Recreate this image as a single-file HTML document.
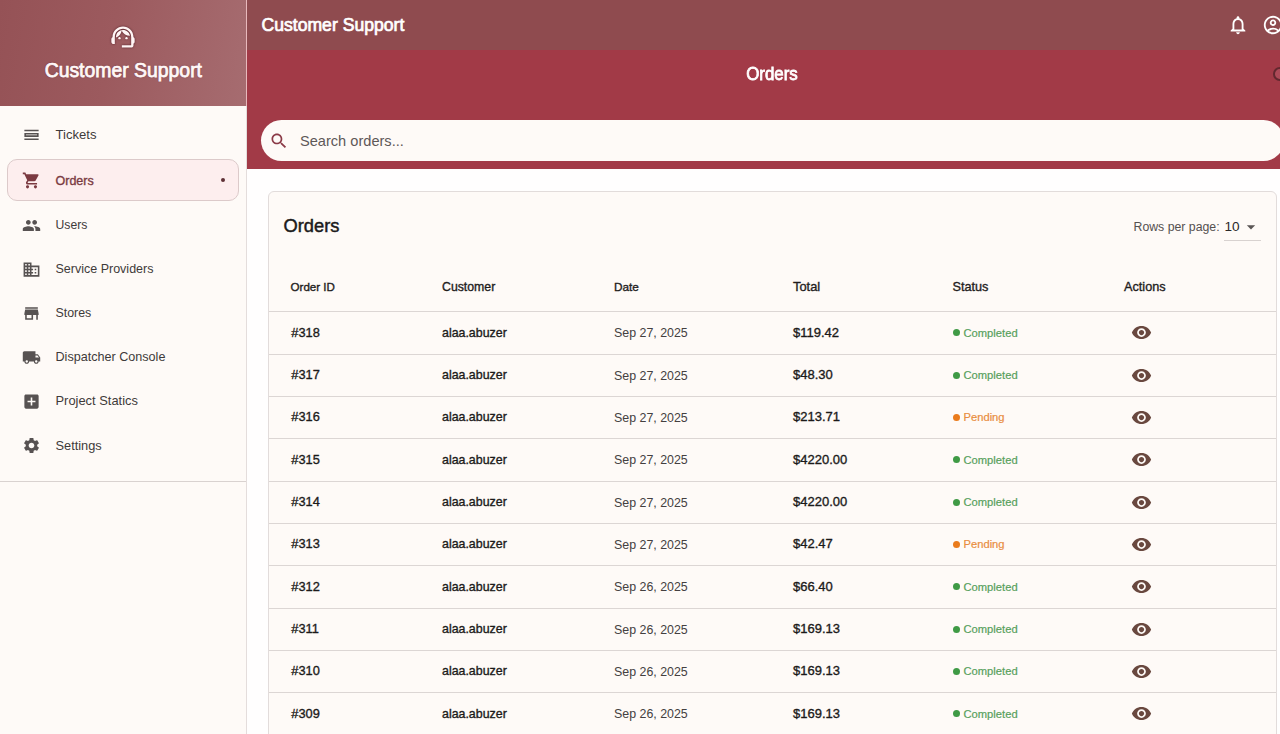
<!DOCTYPE html>
<html><head><meta charset="utf-8"><title>Customer Support - Orders</title>
<style>
html,body{margin:0;padding:0}
body{width:1280px;height:734px;overflow:hidden;position:relative;background:#fffefe;font-family:"Liberation Sans",sans-serif}
.b{position:absolute}
.t{position:absolute;white-space:nowrap}
.ic{position:absolute}
</style></head><body>

<div class="b" style="left:0;top:0;width:246px;height:734px;background:#fefaf7"></div>
<div class="b" style="left:246px;top:0;width:1px;height:734px;background:#e4dddc"></div>
<div class="b" style="left:0;top:0;width:246px;height:106px;background:linear-gradient(100deg,#955256 0%,#9c5a5e 45%,#a66c70 100%)"></div>
<div class="b" style="left:246px;top:0;width:1px;height:106px;background:#e8b9bc"></div>
<svg class="ic" style="left:109.20px;top:23.30px;width:28px;height:28px;fill:#fff5f5;filter:drop-shadow(0 0.5px 1px rgba(50,5,15,.7))" viewBox="0 0 24 24"><path d="M21 12.22C21 6.73 16.74 3 12 3c-4.69 0-9 3.65-9 9.28-.6.34-1 .98-1 1.72v2c0 1.1.9 2 2 2h1v-6.1c0-3.87 3.13-7 7-7s7 3.13 7 7V19h-8v2h8c1.1 0 2-.9 2-2v-1.22c.59-.31 1-.92 1-1.64v-2.3c0-.7-.41-1.31-1-1.62z"/><circle cx="9" cy="13" r="1"/><circle cx="15" cy="13" r="1"/><path d="M18 11.03C17.52 8.18 15.04 6 12.05 6c-3.03 0-6.29 2.51-6.03 6.45 2.47-1.01 4.33-3.21 4.86-5.89 1.31 2.63 4 4.44 7.12 4.47z"/></svg>
<div class="t" style="left:-176.7px;width:600px;text-align:center;top:56.50px;height:27px;line-height:27px;font-size:19.4px;color:#fff8f8;font-weight:400;-webkit-text-stroke:0.75px #fff8f8;text-shadow:0 0 2px rgba(60,10,20,.4);">Customer Support</div>
<div class="b" style="left:7px;top:158.5px;width:230px;height:40px;border:1px solid #dccaca;border-radius:10px;background:#fdeeee"></div>
<div class="b" style="left:220.5px;top:177.8px;width:4px;height:4px;border-radius:50%;background:#5e3035"></div>
<svg class="ic" style="left:21.50px;top:125.40px;width:19px;height:19px;fill:#575252" viewBox="0 0 24 24"><path d="M3 17h18v2H3v-2zm16-5v1H5v-1h14m2-2H3v5h18v-5zM3 6h18v2H3V6z"/></svg>
<div class="t" style="left:55.5px;top:126.40px;height:18px;line-height:18px;font-size:13.1px;color:#3e3a3a;font-weight:400;">Tickets</div>
<svg class="ic" style="left:21.50px;top:170.50px;width:19px;height:19px;fill:#7b3a41" viewBox="0 0 24 24"><path d="M7 18c-1.1 0-1.99.9-1.99 2S5.9 22 7 22s2-.9 2-2-.9-2-2-2zM1 2v2h2l3.6 7.59-1.35 2.45c-.16.28-.25.61-.25.96 0 1.1.9 2 2 2h12v-2H7.42c-.14 0-.25-.11-.25-.25l.03-.12.9-1.63h7.45c.75 0 1.41-.41 1.75-1.03l3.58-6.49c.08-.14.12-.31.12-.48 0-.55-.45-1-1-1H5.21l-.94-2H1zm16 16c-1.1 0-1.99.9-1.99 2s.89 2 1.99 2 2-.9 2-2-.9-2-2-2z"/></svg>
<div class="t" style="left:55.5px;top:171.50px;height:18px;line-height:18px;font-size:12.5px;color:#7a3b42;font-weight:400;-webkit-text-stroke:0.35px currentColor;">Orders</div>
<svg class="ic" style="left:21.50px;top:215.50px;width:19px;height:19px;fill:#575252" viewBox="0 0 24 24"><path d="M16 11c1.66 0 2.99-1.34 2.99-3S17.66 5 16 5c-1.66 0-3 1.34-3 3s1.34 3 3 3zm-8 0c1.66 0 2.99-1.34 2.99-3S9.66 5 8 5C6.34 5 5 6.34 5 8s1.34 3 3 3zm0 2c-2.33 0-7 1.17-7 3.5V19h14v-2.5c0-2.330-4.67-3.5-7-3.5zm8 0c-.29 0-.62.02-.97.05 1.16.84 1.97 1.97 1.97 3.45V19h6v-2.5c0-2.33-4.67-3.5-7-3.5z"/></svg>
<div class="t" style="left:55.5px;top:216.50px;height:17px;line-height:17px;font-size:12.2px;color:#3e3a3a;font-weight:400;">Users</div>
<svg class="ic" style="left:21.50px;top:259.50px;width:19px;height:19px;fill:#575252" viewBox="0 0 24 24"><path d="M12 7V3H2v18h20V7H12zM6 19H4v-2h2v2zm0-4H4v-2h2v2zm0-4H4V9h2v2zm0-4H4V5h2v2zm4 12H8v-2h2v2zm0-4H8v-2h2v2zm0-4H8V9h2v2zm0-4H8V5h2v2zm10 12h-8v-2h2v-2h-2v-2h2v-2h-2V9h8v10zm-2-8h-2v2h2v-2zm0 4h-2v2h2v-2z"/></svg>
<div class="t" style="left:55.5px;top:260.00px;height:18px;line-height:18px;font-size:12.5px;color:#3e3a3a;font-weight:400;">Service Providers</div>
<svg class="ic" style="left:21.50px;top:303.70px;width:19px;height:19px;fill:#575252" viewBox="0 0 24 24"><path d="M20 4H4v2h16V4zm1 10v-2l-1-5H4l-1 5v2h1v6h10v-6h4v6h2v-6h1zm-9 4H6v-4h6v4z"/></svg>
<div class="t" style="left:55.5px;top:304.70px;height:17px;line-height:17px;font-size:12.4px;color:#3e3a3a;font-weight:400;">Stores</div>
<svg class="ic" style="left:21.50px;top:347.70px;width:19px;height:19px;fill:#575252" viewBox="0 0 24 24"><path d="M20 8h-3V4H3c-1.1 0-2 .9-2 2v11h2c0 1.66 1.34 3 3 3s3-1.34 3-3h6c0 1.66 1.34 3 3 3s3-1.34 3-3h2v-5l-3-4zM6 18.5c-.83 0-1.5-.67-1.5-1.5s.67-1.5 1.5-1.5 1.5.67 1.5 1.5-.67 1.5-1.5 1.5zm13.5-9l1.96 2.5H17V9.5h2.5zm-1.5 9c-.83 0-1.5-.67-1.5-1.5s.67-1.5 1.5-1.5 1.5.67 1.5 1.5-.67 1.5-1.5 1.5z"/></svg>
<div class="t" style="left:55.5px;top:348.20px;height:18px;line-height:18px;font-size:12.6px;color:#3e3a3a;font-weight:400;">Dispatcher Console</div>
<svg class="ic" style="left:21.50px;top:391.90px;width:19px;height:19px;fill:#575252" viewBox="0 0 24 24"><path d="M19 3H5c-1.11 0-2 .9-2 2v14c0 1.1.89 2 2 2h14c1.1 0 2-.9 2-2V5c0-1.1-.9-2-2-2zm-2 10h-4v4h-2v-4H7v-2h4V7h2v4h4v2z"/></svg>
<div class="t" style="left:55.5px;top:392.40px;height:18px;line-height:18px;font-size:12.9px;color:#3e3a3a;font-weight:400;">Project Statics</div>
<svg class="ic" style="left:21.50px;top:436.00px;width:19px;height:19px;fill:#575252" viewBox="0 0 24 24"><path d="M19.14 12.94c.04-.3.06-.61.06-.94 0-.32-.02-.64-.07-.94l2.03-1.58c.18-.14.23-.41.12-.61l-1.92-3.32c-.12-.22-.37-.29-.59-.22l-2.39.96c-.5-.38-1.03-.7-1.62-.94l-.36-2.54c-.04-.24-.24-.41-.48-.41h-3.84c-.24 0-.43.17-.47.41l-.36 2.54c-.59.24-1.13.57-1.62.94l-2.39-.96c-.22-.08-.47 0-.59.22L2.74 8.87c-.12.21-.08.47.12.61l2.03 1.58c-.05.3-.09.63-.09.94s.02.64.07.94l-2.03 1.58c-.18.14-.23.41-.12.61l1.92 3.32c.12.22.37.29.59.22l2.39-.96c.5.38 1.03.7 1.62.94l.36 2.54c.05.24.24.41.48.41h3.84c.24 0 .44-.17.47-.41l.36-2.54c.59-.24 1.13-.56 1.62-.94l2.39.96c.22.08.47 0 .59-.22l1.92-3.32c.12-.22.07-.47-.12-.61l-2.01-1.58zM12 15.6c-1.98 0-3.6-1.62-3.6-3.6s1.62-3.6 3.6-3.6 3.6 1.62 3.6 3.6-1.62 3.6-3.6 3.6z"/></svg>
<div class="t" style="left:55.5px;top:436.50px;height:18px;line-height:18px;font-size:12.8px;color:#3e3a3a;font-weight:400;">Settings</div>
<div class="b" style="left:0;top:481px;width:246px;height:1px;background:#d9d2d0"></div>
<div class="b" style="left:247px;top:0;width:1051px;height:50px;background:#8f4b4f"></div>
<div class="t" style="left:261.5px;top:12.50px;height:25px;line-height:25px;font-size:17.6px;color:#ffffff;font-weight:400;-webkit-text-stroke:0.7px #fff;">Customer Support</div>
<svg class="ic" style="left:1226.70px;top:13.50px;width:22px;height:22px;fill:#ffffff" viewBox="0 0 24 24"><path d="M12 22c1.1 0 2-.9 2-2h-4c0 1.1.9 2 2 2zm6-6v-5c0-3.07-1.64-5.64-4.5-6.32V4c0-.83-.67-1.5-1.5-1.5s-1.5.67-1.5 1.5v.68C7.63 5.36 6 7.92 6 11v5l-2 2v1h16v-1l-2-2zm-2 1H8v-6c0-2.48 1.51-4.5 4-4.5s4 2.02 4 4.5v6z"/></svg>
<svg class="ic" style="left:1262.00px;top:13.50px;width:22px;height:22px;fill:#ffffff" viewBox="0 0 24 24"><path d="M12 2C6.48 2 2 6.48 2 12s4.48 10 10 10 10-4.48 10-10S17.52 2 12 2zM7.35 18.5C8.66 17.56 10.260 17 12 17s3.34.56 4.65 1.5c-1.31.94-2.91 1.5-4.65 1.5s-3.34-.56-4.65-1.5zm10.79-1.38C16.45 15.8 14.32 15 12 15s-4.45.8-6.14 2.12C4.7 15.73 4 13.95 4 12c0-4.42 3.58-8 8-8s8 3.58 8 8c0 1.95-.7 3.73-1.86 5.12z"/><path d="M12 6c-1.93 0-3.5 1.57-3.5 3.5S10.07 13 12 13s3.5-1.57 3.5-3.5S13.93 6 12 6zm0 5c-.83 0-1.5-.67-1.5-1.5S11.17 8 12 8s1.5.67 1.5 1.5S12.83 11 12 11z"/></svg>
<div class="b" style="left:247px;top:50px;width:1051px;height:119px;background:#a23a47"></div>
<div class="t" style="left:472.29999999999995px;width:600px;text-align:center;top:60.10px;height:27px;line-height:27px;font-size:19px;color:#ffffff;font-weight:400;-webkit-text-stroke:0.8px #fff;transform:scaleX(0.89);">Orders</div>
<div class="b" style="left:1273px;top:67px;width:9.5px;height:9.5px;border:2px solid #62282f;border-radius:50%;background:rgba(255,200,210,.12)"></div>
<div class="b" style="left:261px;top:120px;width:1023px;height:41px;border-radius:20.5px;background:#fefaf7"></div>
<svg class="ic" style="left:269.00px;top:130.70px;width:20px;height:20px;fill:#8b3a47" viewBox="0 0 24 24"><path d="M15.5 14h-.79l-.28-.27C15.41 12.59 16 11.11 16 9.5 16 5.91 13.09 3 9.5 3S3 5.91 3 9.5 5.91 16 9.5 16c1.61 0 3.09-.59 4.23-1.57l.27.28v.79l5 4.99L20.49 19l-4.99-5zm-6 0C7.01 14 5 11.99 5 9.5S7.01 5 9.5 5 14 7.01 14 9.5 11.99 14 9.5 14z"/></svg>
<div class="t" style="left:300px;top:130.70px;height:20px;line-height:20px;font-size:14.6px;color:#5e5858;font-weight:400;">Search orders...</div>
<div class="b" style="left:268px;top:191px;width:1007px;height:600px;border:1px solid #e2dcdb;border-radius:6px;background:#fefaf7"></div>
<div class="t" style="left:283.5px;top:212.60px;height:26px;line-height:26px;font-size:18.3px;color:#1c1a1a;font-weight:400;-webkit-text-stroke:0.45px currentColor;">Orders</div>
<div class="t" style="left:1133.5px;top:219.10px;height:17px;line-height:17px;font-size:12.3px;color:#555050;font-weight:400;">Rows per page:</div>
<div class="t" style="left:1224.5px;top:216.50px;height:19px;line-height:19px;font-size:13.6px;color:#2a2828;font-weight:400;">10</div>
<svg class="ic" style="left:1241.00px;top:217.00px;width:20px;height:20px;fill:#5a5555" viewBox="0 0 24 24"><path d="M7 10l5 5 5-5z"/></svg>
<div class="b" style="left:1224px;top:240px;width:37px;height:1px;background:#d8d2d0"></div>
<div class="t" style="left:290.5px;top:279.00px;height:16px;line-height:16px;font-size:11.6px;color:#1f1d1d;font-weight:400;-webkit-text-stroke:0.35px currentColor;">Order ID</div>
<div class="t" style="left:442px;top:278.50px;height:17px;line-height:17px;font-size:12.3px;color:#1f1d1d;font-weight:400;-webkit-text-stroke:0.35px currentColor;">Customer</div>
<div class="t" style="left:614px;top:278.50px;height:17px;line-height:17px;font-size:11.8px;color:#1f1d1d;font-weight:400;-webkit-text-stroke:0.35px currentColor;">Date</div>
<div class="t" style="left:793px;top:278.00px;height:18px;line-height:18px;font-size:12.9px;color:#1f1d1d;font-weight:400;-webkit-text-stroke:0.35px currentColor;">Total</div>
<div class="t" style="left:952.5px;top:278.00px;height:18px;line-height:18px;font-size:12.7px;color:#1f1d1d;font-weight:400;-webkit-text-stroke:0.35px currentColor;">Status</div>
<div class="t" style="left:1124px;top:278.00px;height:18px;line-height:18px;font-size:12.7px;color:#1f1d1d;font-weight:400;-webkit-text-stroke:0.35px currentColor;">Actions</div>
<div class="b" style="left:269px;top:311px;width:1007px;height:1px;background:#dcd6d4"></div>
<div class="t" style="left:291.3px;top:323.80px;height:18px;line-height:18px;font-size:12.8px;color:#1c1a1a;font-weight:400;-webkit-text-stroke:0.35px currentColor;">#318</div>
<div class="t" style="left:442px;top:324.80px;height:17px;line-height:17px;font-size:12.4px;color:#1c1a1a;font-weight:400;-webkit-text-stroke:0.35px currentColor;">alaa.abuzer</div>
<div class="t" style="left:614px;top:325.30px;height:17px;line-height:17px;font-size:12.4px;color:#444040;font-weight:400;">Sep 27, 2025</div>
<div class="t" style="left:793px;top:323.80px;height:18px;line-height:18px;font-size:13px;color:#1c1a1a;font-weight:400;-webkit-text-stroke:0.35px currentColor;">$119.42</div>
<div class="b" style="left:952.6px;top:329.30px;width:7px;height:7px;border-radius:50%;background:#3f9a45"></div>
<div class="t" style="left:963.5px;top:324.50px;height:16px;line-height:16px;font-size:11.2px;color:#57a05c;font-weight:400;-webkit-text-stroke:0.2px currentColor;">Completed</div>
<svg class="ic" style="left:1130.80px;top:322.30px;width:21px;height:21px;fill:#69483f" viewBox="0 0 24 24"><path d="M12 4.5C7 4.5 2.73 7.61 1 12c1.73 4.39 6 7.5 11 7.5s9.27-3.11 11-7.5c-1.73-4.39-6-7.5-11-7.5zM12 17c-2.76 0-5-2.24-5-5s2.24-5 5-5 5 2.24 5 5-2.24 5-5 5zm0-8c-1.66 0-3 1.34-3 3s1.34 3 3 3 3-1.34 3-3-1.34-3-3-3z"/></svg>
<div class="b" style="left:269px;top:353.73px;width:1007px;height:1px;background:#dcd6d4"></div>
<div class="t" style="left:291.3px;top:366.13px;height:18px;line-height:18px;font-size:12.8px;color:#1c1a1a;font-weight:400;-webkit-text-stroke:0.35px currentColor;">#317</div>
<div class="t" style="left:442px;top:367.13px;height:17px;line-height:17px;font-size:12.4px;color:#1c1a1a;font-weight:400;-webkit-text-stroke:0.35px currentColor;">alaa.abuzer</div>
<div class="t" style="left:614px;top:367.63px;height:17px;line-height:17px;font-size:12.4px;color:#444040;font-weight:400;">Sep 27, 2025</div>
<div class="t" style="left:793px;top:366.13px;height:18px;line-height:18px;font-size:13px;color:#1c1a1a;font-weight:400;-webkit-text-stroke:0.35px currentColor;">$48.30</div>
<div class="b" style="left:952.6px;top:371.63px;width:7px;height:7px;border-radius:50%;background:#3f9a45"></div>
<div class="t" style="left:963.5px;top:366.83px;height:16px;line-height:16px;font-size:11.2px;color:#57a05c;font-weight:400;-webkit-text-stroke:0.2px currentColor;">Completed</div>
<svg class="ic" style="left:1130.80px;top:364.63px;width:21px;height:21px;fill:#69483f" viewBox="0 0 24 24"><path d="M12 4.5C7 4.5 2.73 7.61 1 12c1.73 4.39 6 7.5 11 7.5s9.27-3.11 11-7.5c-1.73-4.39-6-7.5-11-7.5zM12 17c-2.76 0-5-2.24-5-5s2.24-5 5-5 5 2.24 5 5-2.24 5-5 5zm0-8c-1.66 0-3 1.34-3 3s1.34 3 3 3 3-1.34 3-3-1.34-3-3-3z"/></svg>
<div class="b" style="left:269px;top:396.07px;width:1007px;height:1px;background:#dcd6d4"></div>
<div class="t" style="left:291.3px;top:408.47px;height:18px;line-height:18px;font-size:12.8px;color:#1c1a1a;font-weight:400;-webkit-text-stroke:0.35px currentColor;">#316</div>
<div class="t" style="left:442px;top:409.47px;height:17px;line-height:17px;font-size:12.4px;color:#1c1a1a;font-weight:400;-webkit-text-stroke:0.35px currentColor;">alaa.abuzer</div>
<div class="t" style="left:614px;top:409.97px;height:17px;line-height:17px;font-size:12.4px;color:#444040;font-weight:400;">Sep 27, 2025</div>
<div class="t" style="left:793px;top:408.47px;height:18px;line-height:18px;font-size:13px;color:#1c1a1a;font-weight:400;-webkit-text-stroke:0.35px currentColor;">$213.71</div>
<div class="b" style="left:952.6px;top:413.97px;width:7px;height:7px;border-radius:50%;background:#ea7b1c"></div>
<div class="t" style="left:963.5px;top:409.17px;height:16px;line-height:16px;font-size:11.2px;color:#e98d40;font-weight:400;-webkit-text-stroke:0.2px currentColor;">Pending</div>
<svg class="ic" style="left:1130.80px;top:406.97px;width:21px;height:21px;fill:#69483f" viewBox="0 0 24 24"><path d="M12 4.5C7 4.5 2.73 7.61 1 12c1.73 4.39 6 7.5 11 7.5s9.27-3.11 11-7.5c-1.73-4.39-6-7.5-11-7.5zM12 17c-2.76 0-5-2.24-5-5s2.24-5 5-5 5 2.24 5 5-2.24 5-5 5zm0-8c-1.66 0-3 1.34-3 3s1.34 3 3 3 3-1.34 3-3-1.34-3-3-3z"/></svg>
<div class="b" style="left:269px;top:438.40px;width:1007px;height:1px;background:#dcd6d4"></div>
<div class="t" style="left:291.3px;top:450.80px;height:18px;line-height:18px;font-size:12.8px;color:#1c1a1a;font-weight:400;-webkit-text-stroke:0.35px currentColor;">#315</div>
<div class="t" style="left:442px;top:451.80px;height:17px;line-height:17px;font-size:12.4px;color:#1c1a1a;font-weight:400;-webkit-text-stroke:0.35px currentColor;">alaa.abuzer</div>
<div class="t" style="left:614px;top:452.30px;height:17px;line-height:17px;font-size:12.4px;color:#444040;font-weight:400;">Sep 27, 2025</div>
<div class="t" style="left:793px;top:450.80px;height:18px;line-height:18px;font-size:13px;color:#1c1a1a;font-weight:400;-webkit-text-stroke:0.35px currentColor;">$4220.00</div>
<div class="b" style="left:952.6px;top:456.30px;width:7px;height:7px;border-radius:50%;background:#3f9a45"></div>
<div class="t" style="left:963.5px;top:451.50px;height:16px;line-height:16px;font-size:11.2px;color:#57a05c;font-weight:400;-webkit-text-stroke:0.2px currentColor;">Completed</div>
<svg class="ic" style="left:1130.80px;top:449.30px;width:21px;height:21px;fill:#69483f" viewBox="0 0 24 24"><path d="M12 4.5C7 4.5 2.73 7.61 1 12c1.73 4.39 6 7.5 11 7.5s9.27-3.11 11-7.5c-1.73-4.39-6-7.5-11-7.5zM12 17c-2.76 0-5-2.24-5-5s2.24-5 5-5 5 2.24 5 5-2.24 5-5 5zm0-8c-1.66 0-3 1.34-3 3s1.34 3 3 3 3-1.34 3-3-1.34-3-3-3z"/></svg>
<div class="b" style="left:269px;top:480.73px;width:1007px;height:1px;background:#dcd6d4"></div>
<div class="t" style="left:291.3px;top:493.13px;height:18px;line-height:18px;font-size:12.8px;color:#1c1a1a;font-weight:400;-webkit-text-stroke:0.35px currentColor;">#314</div>
<div class="t" style="left:442px;top:494.13px;height:17px;line-height:17px;font-size:12.4px;color:#1c1a1a;font-weight:400;-webkit-text-stroke:0.35px currentColor;">alaa.abuzer</div>
<div class="t" style="left:614px;top:494.63px;height:17px;line-height:17px;font-size:12.4px;color:#444040;font-weight:400;">Sep 27, 2025</div>
<div class="t" style="left:793px;top:493.13px;height:18px;line-height:18px;font-size:13px;color:#1c1a1a;font-weight:400;-webkit-text-stroke:0.35px currentColor;">$4220.00</div>
<div class="b" style="left:952.6px;top:498.63px;width:7px;height:7px;border-radius:50%;background:#3f9a45"></div>
<div class="t" style="left:963.5px;top:493.83px;height:16px;line-height:16px;font-size:11.2px;color:#57a05c;font-weight:400;-webkit-text-stroke:0.2px currentColor;">Completed</div>
<svg class="ic" style="left:1130.80px;top:491.63px;width:21px;height:21px;fill:#69483f" viewBox="0 0 24 24"><path d="M12 4.5C7 4.5 2.73 7.61 1 12c1.73 4.39 6 7.5 11 7.5s9.27-3.11 11-7.5c-1.73-4.39-6-7.5-11-7.5zM12 17c-2.76 0-5-2.24-5-5s2.24-5 5-5 5 2.24 5 5-2.24 5-5 5zm0-8c-1.66 0-3 1.34-3 3s1.34 3 3 3 3-1.34 3-3-1.34-3-3-3z"/></svg>
<div class="b" style="left:269px;top:523.06px;width:1007px;height:1px;background:#dcd6d4"></div>
<div class="t" style="left:291.3px;top:535.47px;height:18px;line-height:18px;font-size:12.8px;color:#1c1a1a;font-weight:400;-webkit-text-stroke:0.35px currentColor;">#313</div>
<div class="t" style="left:442px;top:536.47px;height:17px;line-height:17px;font-size:12.4px;color:#1c1a1a;font-weight:400;-webkit-text-stroke:0.35px currentColor;">alaa.abuzer</div>
<div class="t" style="left:614px;top:536.97px;height:17px;line-height:17px;font-size:12.4px;color:#444040;font-weight:400;">Sep 27, 2025</div>
<div class="t" style="left:793px;top:535.47px;height:18px;line-height:18px;font-size:13px;color:#1c1a1a;font-weight:400;-webkit-text-stroke:0.35px currentColor;">$42.47</div>
<div class="b" style="left:952.6px;top:540.97px;width:7px;height:7px;border-radius:50%;background:#ea7b1c"></div>
<div class="t" style="left:963.5px;top:536.17px;height:16px;line-height:16px;font-size:11.2px;color:#e98d40;font-weight:400;-webkit-text-stroke:0.2px currentColor;">Pending</div>
<svg class="ic" style="left:1130.80px;top:533.97px;width:21px;height:21px;fill:#69483f" viewBox="0 0 24 24"><path d="M12 4.5C7 4.5 2.73 7.61 1 12c1.73 4.39 6 7.5 11 7.5s9.27-3.11 11-7.5c-1.73-4.39-6-7.5-11-7.5zM12 17c-2.76 0-5-2.24-5-5s2.24-5 5-5 5 2.24 5 5-2.24 5-5 5zm0-8c-1.66 0-3 1.34-3 3s1.34 3 3 3 3-1.34 3-3-1.34-3-3-3z"/></svg>
<div class="b" style="left:269px;top:565.40px;width:1007px;height:1px;background:#dcd6d4"></div>
<div class="t" style="left:291.3px;top:577.80px;height:18px;line-height:18px;font-size:12.8px;color:#1c1a1a;font-weight:400;-webkit-text-stroke:0.35px currentColor;">#312</div>
<div class="t" style="left:442px;top:578.80px;height:17px;line-height:17px;font-size:12.4px;color:#1c1a1a;font-weight:400;-webkit-text-stroke:0.35px currentColor;">alaa.abuzer</div>
<div class="t" style="left:614px;top:579.30px;height:17px;line-height:17px;font-size:12.4px;color:#444040;font-weight:400;">Sep 26, 2025</div>
<div class="t" style="left:793px;top:577.80px;height:18px;line-height:18px;font-size:13px;color:#1c1a1a;font-weight:400;-webkit-text-stroke:0.35px currentColor;">$66.40</div>
<div class="b" style="left:952.6px;top:583.30px;width:7px;height:7px;border-radius:50%;background:#3f9a45"></div>
<div class="t" style="left:963.5px;top:578.50px;height:16px;line-height:16px;font-size:11.2px;color:#57a05c;font-weight:400;-webkit-text-stroke:0.2px currentColor;">Completed</div>
<svg class="ic" style="left:1130.80px;top:576.30px;width:21px;height:21px;fill:#69483f" viewBox="0 0 24 24"><path d="M12 4.5C7 4.5 2.73 7.61 1 12c1.73 4.39 6 7.5 11 7.5s9.27-3.11 11-7.5c-1.73-4.39-6-7.5-11-7.5zM12 17c-2.76 0-5-2.24-5-5s2.24-5 5-5 5 2.24 5 5-2.24 5-5 5zm0-8c-1.66 0-3 1.34-3 3s1.34 3 3 3 3-1.34 3-3-1.34-3-3-3z"/></svg>
<div class="b" style="left:269px;top:607.73px;width:1007px;height:1px;background:#dcd6d4"></div>
<div class="t" style="left:291.3px;top:620.13px;height:18px;line-height:18px;font-size:12.8px;color:#1c1a1a;font-weight:400;-webkit-text-stroke:0.35px currentColor;">#311</div>
<div class="t" style="left:442px;top:621.13px;height:17px;line-height:17px;font-size:12.4px;color:#1c1a1a;font-weight:400;-webkit-text-stroke:0.35px currentColor;">alaa.abuzer</div>
<div class="t" style="left:614px;top:621.63px;height:17px;line-height:17px;font-size:12.4px;color:#444040;font-weight:400;">Sep 26, 2025</div>
<div class="t" style="left:793px;top:620.13px;height:18px;line-height:18px;font-size:13px;color:#1c1a1a;font-weight:400;-webkit-text-stroke:0.35px currentColor;">$169.13</div>
<div class="b" style="left:952.6px;top:625.63px;width:7px;height:7px;border-radius:50%;background:#3f9a45"></div>
<div class="t" style="left:963.5px;top:620.83px;height:16px;line-height:16px;font-size:11.2px;color:#57a05c;font-weight:400;-webkit-text-stroke:0.2px currentColor;">Completed</div>
<svg class="ic" style="left:1130.80px;top:618.63px;width:21px;height:21px;fill:#69483f" viewBox="0 0 24 24"><path d="M12 4.5C7 4.5 2.73 7.61 1 12c1.73 4.39 6 7.5 11 7.5s9.27-3.11 11-7.5c-1.73-4.39-6-7.5-11-7.5zM12 17c-2.76 0-5-2.24-5-5s2.24-5 5-5 5 2.24 5 5-2.24 5-5 5zm0-8c-1.66 0-3 1.34-3 3s1.34 3 3 3 3-1.34 3-3-1.34-3-3-3z"/></svg>
<div class="b" style="left:269px;top:650.06px;width:1007px;height:1px;background:#dcd6d4"></div>
<div class="t" style="left:291.3px;top:662.46px;height:18px;line-height:18px;font-size:12.8px;color:#1c1a1a;font-weight:400;-webkit-text-stroke:0.35px currentColor;">#310</div>
<div class="t" style="left:442px;top:663.46px;height:17px;line-height:17px;font-size:12.4px;color:#1c1a1a;font-weight:400;-webkit-text-stroke:0.35px currentColor;">alaa.abuzer</div>
<div class="t" style="left:614px;top:663.96px;height:17px;line-height:17px;font-size:12.4px;color:#444040;font-weight:400;">Sep 26, 2025</div>
<div class="t" style="left:793px;top:662.46px;height:18px;line-height:18px;font-size:13px;color:#1c1a1a;font-weight:400;-webkit-text-stroke:0.35px currentColor;">$169.13</div>
<div class="b" style="left:952.6px;top:667.96px;width:7px;height:7px;border-radius:50%;background:#3f9a45"></div>
<div class="t" style="left:963.5px;top:663.16px;height:16px;line-height:16px;font-size:11.2px;color:#57a05c;font-weight:400;-webkit-text-stroke:0.2px currentColor;">Completed</div>
<svg class="ic" style="left:1130.80px;top:660.96px;width:21px;height:21px;fill:#69483f" viewBox="0 0 24 24"><path d="M12 4.5C7 4.5 2.73 7.61 1 12c1.73 4.39 6 7.5 11 7.5s9.27-3.11 11-7.5c-1.73-4.39-6-7.5-11-7.5zM12 17c-2.76 0-5-2.24-5-5s2.24-5 5-5 5 2.24 5 5-2.24 5-5 5zm0-8c-1.66 0-3 1.34-3 3s1.34 3 3 3 3-1.34 3-3-1.34-3-3-3z"/></svg>
<div class="b" style="left:269px;top:692.40px;width:1007px;height:1px;background:#dcd6d4"></div>
<div class="t" style="left:291.3px;top:704.80px;height:18px;line-height:18px;font-size:12.8px;color:#1c1a1a;font-weight:400;-webkit-text-stroke:0.35px currentColor;">#309</div>
<div class="t" style="left:442px;top:705.80px;height:17px;line-height:17px;font-size:12.4px;color:#1c1a1a;font-weight:400;-webkit-text-stroke:0.35px currentColor;">alaa.abuzer</div>
<div class="t" style="left:614px;top:706.30px;height:17px;line-height:17px;font-size:12.4px;color:#444040;font-weight:400;">Sep 26, 2025</div>
<div class="t" style="left:793px;top:704.80px;height:18px;line-height:18px;font-size:13px;color:#1c1a1a;font-weight:400;-webkit-text-stroke:0.35px currentColor;">$169.13</div>
<div class="b" style="left:952.6px;top:710.30px;width:7px;height:7px;border-radius:50%;background:#3f9a45"></div>
<div class="t" style="left:963.5px;top:705.50px;height:16px;line-height:16px;font-size:11.2px;color:#57a05c;font-weight:400;-webkit-text-stroke:0.2px currentColor;">Completed</div>
<svg class="ic" style="left:1130.80px;top:703.30px;width:21px;height:21px;fill:#69483f" viewBox="0 0 24 24"><path d="M12 4.5C7 4.5 2.73 7.61 1 12c1.73 4.39 6 7.5 11 7.5s9.27-3.11 11-7.5c-1.73-4.39-6-7.5-11-7.5zM12 17c-2.76 0-5-2.24-5-5s2.24-5 5-5 5 2.24 5 5-2.24 5-5 5zm0-8c-1.66 0-3 1.34-3 3s1.34 3 3 3 3-1.34 3-3-1.34-3-3-3z"/></svg>
</body></html>
